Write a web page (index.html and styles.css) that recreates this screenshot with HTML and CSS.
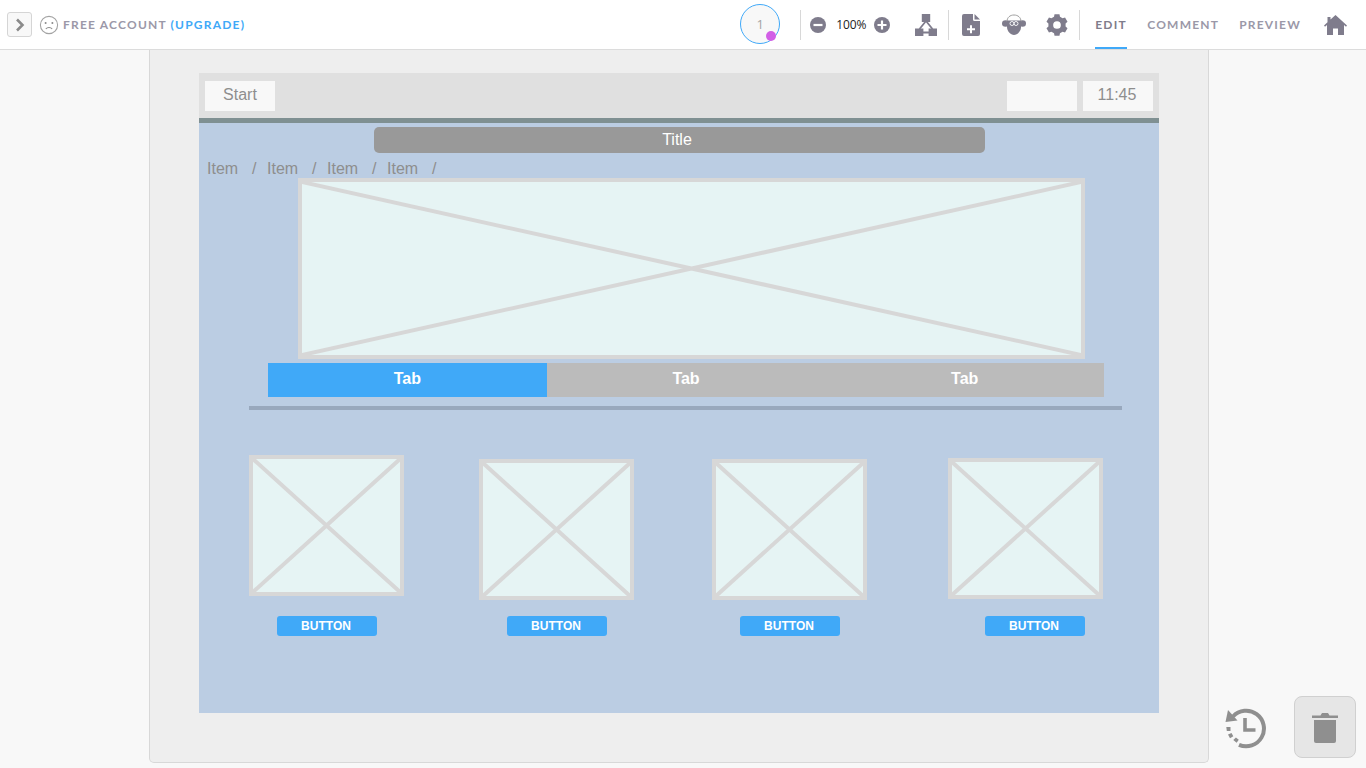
FILE: index.html
```html
<!DOCTYPE html>
<html lang="en">
<head>
    <meta charset="UTF-8">
    <title>Wireframe Editor</title>
    <link rel="stylesheet" href="styles.css">
</head>
<body>
    <header class="toolbar">
        <div class="account">
            <button class="expand-btn">
                <svg width="10" height="14" viewBox="0 0 10 14"><path d="M2 1.5 7.5 7 2 12.5" fill="none" stroke="#8a8a8a" stroke-width="2.6"/></svg>
            </button>
            <svg class="face" width="20" height="20" viewBox="0 0 20 20">
                <circle cx="10" cy="10" r="8.6" fill="none" stroke="#a3a3a3" stroke-width="1.1"/>
                <circle cx="6.6" cy="8" r="1" fill="#8a8a8a"/>
                <circle cx="13.4" cy="8" r="1" fill="#8a8a8a"/>
                <path d="M6.8 14c1.6-2 4.8-2 6.4 0" fill="none" stroke="#8a8a8a" stroke-width="1.1"/>
            </svg>
            <span class="plan">FREE ACCOUNT <a class="upgrade">(UPGRADE)</a></span>
        </div>

        <div class="tools">
            <div class="avatar">1<span class="avatar-dot"></span></div>
            <span class="divider divider-avatar"></span>
            <svg class="zoom-out" width="16" height="16" viewBox="0 0 16 16"><circle cx="8" cy="8" r="8" fill="#7f7c8c"/><rect x="3.5" y="6.9" width="9" height="2.2" fill="#fff"/></svg>
            <span class="zoom-level">100%</span>
            <svg class="zoom-in" width="16" height="16" viewBox="0 0 16 16"><circle cx="8" cy="8" r="8" fill="#7f7c8c"/><path d="M3.5 6.9h3.4V3.5h2.2v3.4h3.4v2.2H9.100v3.4H6.900V9.100H3.500z" fill="#fff"/></svg>
            <svg class="sitemap" width="22" height="22" viewBox="0 0 22 22">
                <rect x="6.800" y="0" width="8.400" height="8" fill="#7f7c8c"/>
                <rect x="0" y="14.500" width="8.400" height="7.500" fill="#7f7c8c"/>
                <rect x="13.600" y="14.500" width="8.400" height="7.500" fill="#7f7c8c"/>
                <path d="M11 7 4.500 15M11 7l6.500 8M8 18.500h6" fill="none" stroke="#7f7c8c" stroke-width="1.800"/>
            </svg>
            <span class="divider divider-map"></span>
            <svg class="new-page" width="18" height="22" viewBox="0 0 18 22">
                <path d="M2 0h9v5.500a1.500 1.500 0 0 0 1.500 1.500H18v13a2 2 0 0 1-2 2H2a2 2 0 0 1-2-2V2a2 2 0 0 1 2-2z" fill="#7f7c8c"/>
                <path d="M12.500 0 18 5.500h-5.500z" fill="#7f7c8c"/>
                <path d="M5 14.300h3v-3h2v3h3v2h-3v3H8v-3H5z" fill="#fff"/>
            </svg>
            <svg class="sheep" width="24" height="21" viewBox="0 0 24 21">
                <ellipse cx="3.500" cy="9.500" rx="3.500" ry="3.300" fill="#7f7c8c"/>
                <ellipse cx="20.500" cy="9.500" rx="3.500" ry="3.300" fill="#7f7c8c"/>
                <path d="M5 7.500c0-4 3-6.500 7-6.500s7 2.500 7 6.500z" fill="#fff" stroke="#a0a0a0" stroke-width="1"/>
                <path d="M5 6.500h14v6.500c0 4-3.500 8-7 8s-7-4-7-8z" fill="#7f7c8c"/>
                <circle cx="10" cy="9.500" r="2" fill="none" stroke="#fff" stroke-width=".9"/>
                <circle cx="14" cy="9.500" r="2" fill="none" stroke="#fff" stroke-width=".9"/>
            </svg>
            <svg class="gear" width="22" height="22" viewBox="0 0 24 24">
                <path fill="#7f7c8c" fill-rule="evenodd" d="M9.300.3h5.400l.55 2.770 2.850 1.650 2.670-.9 2.700 4.670-2.110 1.860v3.300l2.110 1.860-2.700 4.670-2.670-.9-2.850 1.650-.55 2.770H9.300l-.55-2.770-2.850-1.650-2.670.9-2.700-4.670 2.110-1.860v-3.300L.53 8.490l2.700-4.670 2.670.9 2.850-1.650zM12 7.800a4.200 4.200 0 1 0 0 8.400 4.200 4.200 0 0 0 0-8.400z"/>
            </svg>
            <span class="divider divider-gear"></span>
            <nav class="modes">
                <a class="mode active">EDIT</a>
                <a class="mode">COMMENT</a>
                <a class="mode">PREVIEW</a>
            </nav>
            <svg class="home" width="23" height="20" viewBox="0 0 23 20">
                <path fill="#7f7c8c" d="M11.500 0 23 10.500l-1 1.200-2-1.700V20h-6v-6.500H9V20H3V10L1 11.700 0 10.500l3.500-3.200V2h3v2.600z"/>
            </svg>
        </div>
    </header>

    <main class="workspace">
        <section class="panel">
            <div class="canvas">
                <div class="wf-bar"></div>
                <div class="wf-cell wf-start">Start</div>
                <div class="wf-cell wf-blank"></div>
                <div class="wf-cell wf-clock">11:45</div>

                <div class="wf-title">Title</div>

                <div class="wf-crumbs">
                    <span>Item</span><span>/</span>
                    <span>Item</span><span>/</span>
                    <span>Item</span><span>/</span>
                    <span>Item</span><span>/</span>
                </div>

                <svg class="wf-img wf-hero" viewBox="0 0 100 100" preserveAspectRatio="none">
                    <path d="M0 0 100 100M100 0 0 100" vector-effect="non-scaling-stroke"/>
                </svg>

                <div class="wf-tabs">
                    <div class="wf-tab active">Tab</div>
                    <div class="wf-tab">Tab</div>
                    <div class="wf-tab">Tab</div>
                </div>

                <div class="wf-rule"></div>

                <svg class="wf-img thumb-1" viewBox="0 0 100 100" preserveAspectRatio="none"><path d="M0 0 100 100M100 0 0 100" vector-effect="non-scaling-stroke"/></svg>
                <svg class="wf-img thumb-2" viewBox="0 0 100 100" preserveAspectRatio="none"><path d="M0 0 100 100M100 0 0 100" vector-effect="non-scaling-stroke"/></svg>
                <svg class="wf-img thumb-3" viewBox="0 0 100 100" preserveAspectRatio="none"><path d="M0 0 100 100M100 0 0 100" vector-effect="non-scaling-stroke"/></svg>
                <svg class="wf-img thumb-4" viewBox="0 0 100 100" preserveAspectRatio="none"><path d="M0 0 100 100M100 0 0 100" vector-effect="non-scaling-stroke"/></svg>

                <div class="wf-btn btn-1">BUTTON</div>
                <div class="wf-btn btn-2">BUTTON</div>
                <div class="wf-btn btn-3">BUTTON</div>
                <div class="wf-btn btn-4">BUTTON</div>
            </div>
        </section>

        <svg class="history" width="42" height="42" viewBox="0 0 42 42">
            <path d="M9 9.500A17.800 17.800 0 1 1 15 37.800" fill="none" stroke="#8f8f8f" stroke-width="4"/>
            <path d="M4 3 1.500 15 13.500 13.500z" fill="#8f8f8f"/>
            <path d="M2.300 20h4.200v4H2.800zM4 27.500l3.500-1.500 1.800 3.200-3.300 2zM9.300 33l2.600-2.500 2.900 2.300-2.200 3z" fill="#8f8f8f"/>
            <path d="M21 11v12h10.500" fill="none" stroke="#8f8f8f" stroke-width="3.600"/>
        </svg>
        <button class="trash">
            <svg width="26" height="31" viewBox="0 0 26 31">
                <path d="M0 3.500h8.500L10 1h6l1.500 2.500H26v2.500H0z" fill="#8f8f8f"/>
                <path d="M2 8h22v21a2 2 0 0 1-2 2H4a2 2 0 0 1-2-2z" fill="#8f8f8f"/>
            </svg>
        </button>
    </main>
</body>
</html>
```

FILE: styles.css
```css
* {
    margin: 0;
    padding: 0;
    box-sizing: border-box;
}

html, body {
    height: 100%;
    overflow: hidden;
}

body {
    background-color: #f8f8f8;
    font-family: 'Lato', sans-serif;
}

/* Top toolbar */
.toolbar {
    display: flex;
    align-items: center;
    justify-content: space-between;
    height: 50px;
    background-color: #ffffff;
    border-bottom: 1px solid #dcdcdc;
}

.account {
    display: flex;
    align-items: center;
    padding-left: 7px;
}

.expand-btn {
    display: flex;
    align-items: center;
    justify-content: center;
    width: 25px;
    height: 25px;
    background-color: #f8f8f8;
    border: 1px solid #d5d5d5;
    border-radius: 3px;
}

.face {
    margin-left: 7px;
}

.plan {
    margin-left: 4px;
    font-size: 12px;
    font-weight: 700;
    letter-spacing: 1.2px;
    color: #9b98a8;
}

.upgrade {
    color: #40a9f8;
}

.tools {
    display: flex;
    align-items: center;
    height: 49px;
}

.avatar {
    position: relative;
    width: 40px;
    height: 40px;
    margin-bottom: 1px;
    line-height: 38px;
    text-align: center;
    font-family: 'Open Sans', sans-serif;
    font-size: 13px;
    color: #a5a5a5;
    background-color: #f8f8f8;
    border: 1px solid #40a9f8;
    border-radius: 50%;
}

.avatar-dot {
    position: absolute;
    right: 3px;
    bottom: 2px;
    width: 10px;
    height: 10px;
    background-color: #d25fe6;
    border-radius: 50%;
}

.divider {
    width: 1px;
    height: 30px;
    background-color: #d8d8d8;
}

.divider-avatar { margin-left: 20px; }
.divider-map { margin-left: 11px; }
.divider-gear { margin-left: 11px; }

.zoom-out { margin-left: 9px; }
.zoom-in { margin-left: 8px; }

.zoom-level {
    width: 30px;
    margin-left: 10px;
    font-family: 'Open Sans', sans-serif;
    font-size: 12px;
    letter-spacing: -0.1px;
    color: #222222;
}

.sitemap { margin-left: 25px; }
.new-page { margin-left: 13px; }
.sheep { margin-left: 22px; }
.gear { margin-left: 20px; }

.modes {
    display: flex;
    gap: 21px;
    height: 49px;
    margin-left: 15px;
}

.mode {
    height: 49px;
    line-height: 50px;
    font-size: 12px;
    font-weight: 700;
    letter-spacing: 1.2px;
    color: #9b98a8;
}

.mode:last-child {
    margin-left: -1px;
}

.mode.active {
    width: 32px;
    margin-right: -1px;
    color: #7f7c8c;
    border-bottom: 2px solid #40a9f8;
}

.home {
    margin-left: 23px;
    margin-right: 19px;
}

/* Editor area */
.workspace {
    position: relative;
    height: 718px;
}

.panel {
    width: 1060px;
    height: 713px;
    margin-left: 149px;
    padding: 23px 49px;
    background-color: #eeeeee;
    border: 1px solid #d8d8d8;
    border-top: 0;
    border-radius: 0 0 5px 5px;
}

/* Wireframe canvas, widgets are placed freely on it */
.canvas {
    position: relative;
    width: 960px;
    height: 640px;
    background-color: #bbcde3;
    font-family: 'Liberation Sans', Arial, sans-serif;
}

.wf-bar {
    position: absolute;
    left: 0;
    top: 0;
    width: 960px;
    height: 50px;
    background-color: #e0e0e0;
    border-bottom: 5px solid #7f9092;
}

.wf-cell {
    position: absolute;
    top: 8px;
    width: 70px;
    height: 30px;
    line-height: 28px;
    text-align: center;
    font-size: 16px;
    color: #8e8e8e;
    background-color: #f8f8f8;
}

.wf-start { left: 6px; }
.wf-blank { left: 808px; }
.wf-clock { left: 884px; padding-right: 2px; }

.wf-title {
    position: absolute;
    left: 175px;
    top: 54px;
    width: 611px;
    height: 26px;
    padding-right: 5px;
    line-height: 25px;
    text-align: center;
    font-size: 16px;
    color: #ffffff;
    background-color: #999999;
    border-radius: 5px;
}

.wf-crumbs {
    position: absolute;
    left: 8px;
    top: 87px;
    display: flex;
    font-size: 16px;
    line-height: 18px;
    color: #8e8e8e;
}

.wf-crumbs span:nth-child(odd) { width: 45px; }
.wf-crumbs span:nth-child(even) { width: 15px; }

.wf-img {
    position: absolute;
    background-color: #e6f4f4;
    border: 4px solid #d7d7d7;
    fill: none;
    stroke: #d7d7d7;
    stroke-width: 4px;
}

.wf-hero {
    left: 99px;
    top: 105px;
    width: 787px;
    height: 181px;
}

.thumb-1 { left: 50px; top: 382px; width: 155px; height: 141px; }
.thumb-2 { left: 280px; top: 386px; width: 155px; height: 141px; }
.thumb-3 { left: 513px; top: 386px; width: 155px; height: 141px; }
.thumb-4 { left: 749px; top: 385px; width: 155px; height: 141px; }

.wf-tabs {
    position: absolute;
    left: 69px;
    top: 290px;
    display: flex;
    width: 836px;
    height: 34px;
    background-color: #bbbbbb;
}

.wf-tab {
    flex: 1;
    line-height: 32px;
    text-align: center;
    font-size: 16px;
    font-weight: 700;
    color: #ffffff;
}

.wf-tab.active {
    background-color: #40a9f8;
}

.wf-rule {
    position: absolute;
    left: 50px;
    top: 333px;
    width: 873px;
    height: 4px;
    background-color: #98a8bd;
}

.wf-btn {
    position: absolute;
    top: 543px;
    width: 100px;
    height: 20px;
    padding-right: 2px;
    line-height: 20px;
    text-align: center;
    font-size: 12px;
    font-weight: 700;
    color: #ffffff;
    background-color: #40a9f8;
    border-radius: 3px;
}

.btn-1 { left: 78px; }
.btn-2 { left: 308px; }
.btn-3 { left: 541px; }
.btn-4 { left: 786px; }

/* Floating controls */
.history {
    position: absolute;
    left: 1224px;
    top: 657px;
}

.trash {
    position: absolute;
    left: 1294px;
    top: 646px;
    display: flex;
    align-items: center;
    justify-content: center;
    width: 62px;
    height: 62px;
    background-color: #e6e6e6;
    border: 1px solid #d0d0d0;
    border-radius: 8px;
}
```
